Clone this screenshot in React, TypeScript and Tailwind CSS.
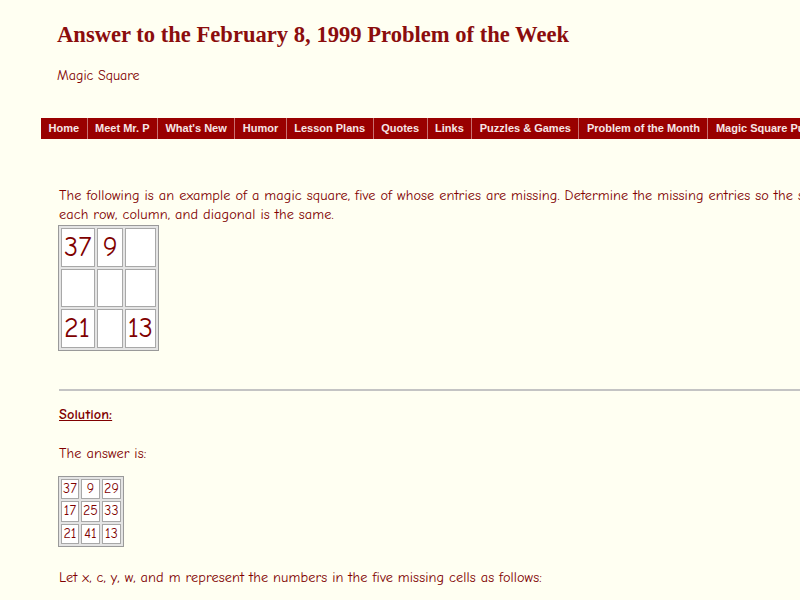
import React from "react";

const nav = [
  "Home",
  "Meet Mr. P",
  "What's New",
  "Humor",
  "Lesson Plans",
  "Quotes",
  "Links",
  "Puzzles & Games",
  "Problem of the Month",
  "Magic Square Puzzles",
  "Contact",
];

const comic = { fontFamily: '"Comic Sans MS", "Comic Neue", "DejaVu Sans", sans-serif' };

function BigTable() {
  const rows = [
    ["37", "9", ""],
    ["", "", ""],
    ["21", "", "13"],
  ];
  return (
    <table className="border-separate border-spacing-[2px] border border-[#9a9a9a] bg-[#e4e4e4]">
      <tbody>
        {rows.map((r, i) => (
          <tr key={i}>
            {r.map((c, j) => (
              <td
                key={j}
                className={
                  "h-[38.5px] min-w-[26px] border border-[#a8a8a8] bg-white pr-[2px] text-left align-middle text-[28px] leading-none text-[#800000] " +
                  (j === 1 ? "pl-[5px]" : "pl-[2px]")
                }
              >
                {c}
              </td>
            ))}
          </tr>
        ))}
      </tbody>
    </table>
  );
}

function SmallTable() {
  const rows = [
    ["37", "9", "29"],
    ["17", "25", "33"],
    ["21", "41", "13"],
  ];
  return (
    <table className="border-separate border-spacing-[2px] border border-[#9a9a9a] bg-[#e4e4e4]">
      <tbody>
        {rows.map((r, i) => (
          <tr key={i}>
            {r.map((c, j) => (
              <td
                key={j}
                className="h-[20.5px] border border-[#a8a8a8] bg-white px-[1px] text-center align-middle text-[14px] leading-none text-[#800000]"
              >
                {c}
              </td>
            ))}
          </tr>
        ))}
      </tbody>
    </table>
  );
}

export default function App() {
  return (
    <div className="h-[600px] w-[800px] overflow-hidden bg-[#fffff2]">
      <div className="w-[1000px]">
        <h1
          className="pl-[57px] pt-[22px] text-[22.6px] font-bold leading-[26px] text-[#8b0d0d]"
          style={{ fontFamily: '"Liberation Serif", "Times New Roman", serif' }}
        >
          Answer to the February 8, 1999 Problem of the Week
        </h1>
        <div className="pl-[57px] pt-[19px] text-[14px] leading-[18px] text-[#800000]" style={comic}>
          Magic Square
        </div>
        <div className="ml-[41px] mt-[33px] flex h-[21px] bg-[#990000]" style={{ fontFamily: '"Liberation Sans", Arial, sans-serif' }}>
          {nav.map((n) => (
            <div
              key={n}
              className="flex items-center whitespace-nowrap border-r border-[#c87070] px-[7.5px] text-[11px] font-bold text-[#f6e6e6]"
            >
              {n}
            </div>
          ))}
        </div>
        <div className="pl-[59px] text-[14.3px] tracking-[0.1px] text-[#800000]" style={comic}>
          <p className="pt-[47px] leading-[19px]">
            The following is an example of a magic square, five of whose entries are missing. Determine the missing entries so the sum of the numbers in
            <br />
            each row, column, and diagonal is the same.
          </p>
          <div className="-ml-[1px] mt-[1px]">
            <BigTable />
          </div>
          <hr className="mt-[38px] border-t-2 border-[#c4c4c4]" />
          <p className="mt-[15px] font-bold leading-[18px] underline">Solution:</p>
          <p className="mt-[21px] leading-[18px]">The answer is:</p>
          <div className="-ml-[1px] mt-[13px]">
            <SmallTable />
          </div>
          <p className="mt-[22px] leading-[18px]">
            Let x, c, y, w, and m represent the numbers in the five missing cells as follows:
          </p>
        </div>
      </div>
    </div>
  );
}
